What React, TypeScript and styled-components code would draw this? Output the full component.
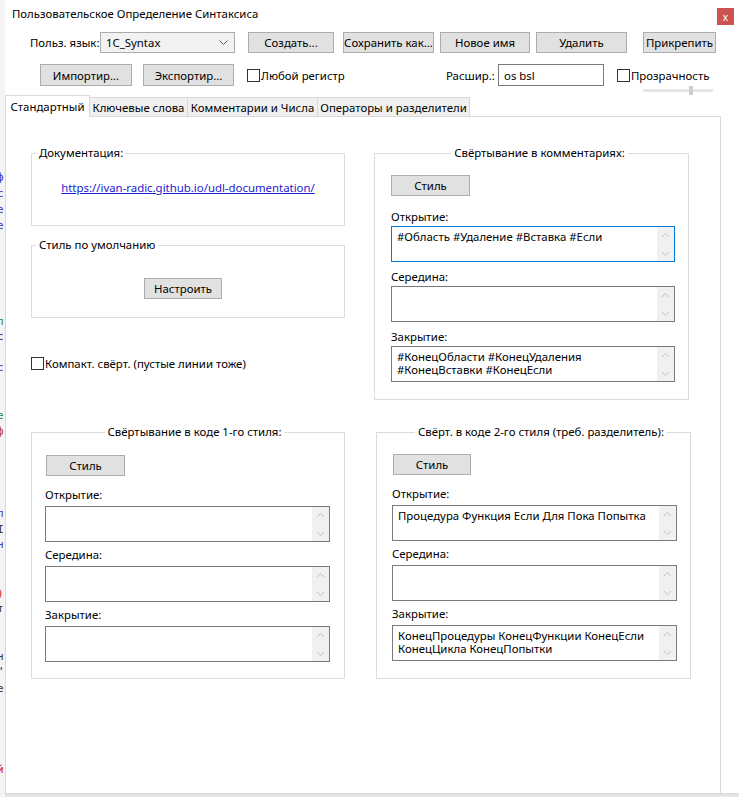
import React from "react";
import styled, {createGlobalStyle} from "styled-components";

const GlobalStyle = createGlobalStyle`
  html, body {
    margin: 0;
    padding: 0;
    background: #fff;
  }
  body {
    font-family: "Noto Sans", "Liberation Sans", sans-serif;
    font-size: 11.4px;
    color: #000;
  }
  * {
    box-sizing: border-box;
  }
`;

const Screen = styled.div`
  width: 739px;
  height: 797px;
  display: flex;
  overflow: hidden;
  background: #fff;
`;

const BackStrip = styled.div`
  width: 5px;
  flex: none;
  display: flex;
  flex-direction: column;
  overflow: hidden;
  background: #f4f4f4;
`;

const Glyph = styled.span<{ $mt: number; $color: string }>`
  display: block;
  margin-top: ${p => p.$mt}px;
  margin-left: -3px;
  height: 14px;
  line-height: 14px;
  font-size: 11px;
  font-family: "DejaVu Sans Mono", monospace;
  color: ${p => p.$color};
`;

const Window = styled.div`
  flex: 1;
  display: flex;
  flex-direction: column;
  min-width: 0;
`;

const TitleBar = styled.div`
  height: 31px;
  display: flex;
  align-items: flex-start;
  justify-content: space-between;
`;

const Title = styled.div`
  margin: 6px 0 0 7px;
  line-height: 16px;
`;

const CloseButton = styled.div`
  width: 17px;
  height: 17px;
  margin: 8px 5px 0 0;
  background: #cd5353;
  color: #fff;
  font-size: 10px;
  display: flex;
  align-items: center;
  justify-content: center;
  line-height: 1;
`;

const Row = styled.div<{ $mt: number; $h: number }>`
  display: flex;
  align-items: center;
  margin-top: ${p => p.$mt}px;
  height: ${p => p.$h}px;
`;

const Label = styled.span<{ $ml?: number; $w?: number }>`
  margin-left: ${p => p.$ml ?? 0}px;
  width: ${p => (p.$w ? `${p.$w}px` : "auto")};
  flex: none;
  white-space: nowrap;
`;

const Button = styled.div<{ $ml?: number; $w: number; $h?: number }>`
  margin-left: ${p => p.$ml ?? 0}px;
  width: ${p => p.$w}px;
  height: ${p => p.$h ?? 21}px;
  flex: none;
  background: #e1e1e1;
  border: 1px solid #adadad;
  display: flex;
  align-items: center;
  justify-content: center;
  white-space: nowrap;
`;

const Combo = styled.div`
  width: 135px;
  height: 21px;
  flex: none;
  background: #f2f2f2;
  border: 1px solid #acacac;
  display: flex;
  align-items: center;
  justify-content: space-between;
  padding: 0 6px 0 5px;
`;

const Input = styled.div<{ $w: number }>`
  width: ${p => p.$w}px;
  height: 22px;
  flex: none;
  border: 1px solid #7a7a7a;
  background: #fff;
  display: flex;
  align-items: center;
  padding-left: 5px;
`;

const Check = styled.label<{ $ml?: number; $w?: number }>`
  margin-left: ${p => p.$ml ?? 0}px;
  width: ${p => (p.$w ? `${p.$w}px` : "auto")};
  flex: none;
  display: flex;
  align-items: center;
  white-space: nowrap;
`;

const CheckBox = styled.span`
  width: 13px;
  height: 13px;
  border: 1px solid #333;
  background: #fff;
  margin-right: 1px;
  flex: none;
`;

const SliderRow = styled.div`
  height: 9px;
  display: flex;
  align-items: center;
  padding-left: 638px;
`;

const Track = styled.div`
  position: relative;
  width: 70px;
  height: 3px;
  background: #e6e6e6;
`;

const Thumb = styled.div`
  position: absolute;
  left: 46px;
  top: -3px;
  width: 4px;
  height: 9px;
  background: #cdcdcd;
`;

const TabStrip = styled.div`
  display: flex;
  align-items: flex-end;
  height: 21px;
  position: relative;
  z-index: 1;
`;

const Tab = styled.div<{ $w: number; $active?: boolean }>`
  width: ${p => p.$w}px;
  height: ${p => (p.$active ? 22 : 19)}px;
  margin-bottom: ${p => (p.$active ? -1 : 0)}px;
  background: ${p => (p.$active ? "#fff" : "#f0f0f0")};
  border: 1px solid #d9d9d9;
  border-bottom: none;
  border-left: ${p => (p.$active ? "1px solid #d9d9d9" : "none")};
  display: flex;
  align-items: center;
  justify-content: center;
  white-space: nowrap;
  padding-top: ${p => (p.$active ? 0 : 1)}px;
`;

const Panel = styled.div`
  width: 716px;
  height: 677px;
  flex: none;
  border: 1px solid #d9d9d9;
  border-bottom: none;
  padding: 36px 0 0 25px;
  display: grid;
  grid-template-columns: 314px 317px;
  column-gap: 29px;
  row-gap: 32px;
  align-content: start;
`;

const BottomEdge = styled.div`
  height: 4px;
  flex: none;
  background: linear-gradient(#dadada, #ececec);
`;

const Column = styled.div`
  display: flex;
  flex-direction: column;
`;

const Group = styled.div<{ $h: number; $w: number; $ml?: number; $mt?: number; $pl?: number }>`
  width: ${p => p.$w}px;
  height: ${p => p.$h}px;
  margin-left: ${p => p.$ml ?? 0}px;
  margin-top: ${p => p.$mt ?? 0}px;
  padding-left: ${p => p.$pl ?? 0}px;
  border: 1px solid #dcdcdc;
  display: flex;
  flex-direction: column;
  align-items: flex-start;
`;

const Legend = styled.div<{ $center?: boolean }>`
  align-self: ${p => (p.$center ? "center" : "flex-start")};
  margin: -9px 0 0 ${p => (p.$center ? 0 : 4)}px;
  padding: 0 3px;
  line-height: 16px;
  background: #fff;
  white-space: nowrap;
`;

const Link = styled.a`
  align-self: center;
  margin-top: 19px;
  line-height: 16px;
  color: #1b1bd0;
  text-decoration: underline;
`;

const FieldLabel = styled.div<{ $mt: number; $mb: number }>`
  margin: ${p => p.$mt}px 0 ${p => p.$mb}px;
  line-height: 16px;
`;

const TextBox = styled.div<{ $w: number; $focus?: boolean }>`
  width: ${p => p.$w}px;
  height: 36px;
  border: 1px solid ${p => (p.$focus ? "#0078d7" : "#7a7a7a")};
  background: #fff;
  display: flex;
`;

const TextContent = styled.div`
  flex: 1;
  padding: 3px 5px;
  line-height: 13px;
  white-space: pre;
  overflow: hidden;
`;

const ScrollBar = styled.div`
  width: 17px;
  flex: none;
  background: #f0f0f0;
  display: flex;
  flex-direction: column;
  align-items: center;
  justify-content: space-between;
  padding: 5px 0 4px;
`;

const Chevron = ({down}: { down?: boolean }) => (
  <svg width="9" height="6" viewBox="0 0 9 6">
    <path d={down ? "M1 1 L4.5 4.5 L8 1" : "M1 5 L4.5 1.5 L8 5"} fill="none" stroke="#c2c2c2" strokeWidth="1"/>
  </svg>
);

type FieldProps = {
  label: string;
  text?: string;
  w: number;
  mt: number;
  mb: number;
  focus?: boolean;
};

function Field({label, text, w, mt, mb, focus}: FieldProps) {
  return (
    <>
      <FieldLabel $mt={mt} $mb={mb}>{label}</FieldLabel>
      <TextBox $w={w} $focus={focus}>
        <TextContent>{text}</TextContent>
        <ScrollBar>
          <Chevron/>
          <Chevron down/>
        </ScrollBar>
      </TextBox>
    </>
  );
}

const glyphs = [
  {y: 178, ch: "ф", color: "#3b3bc4"},
  {y: 194, ch: "c", color: "#3b3bc4"},
  {y: 210, ch: "e", color: "#3b3bc4"},
  {y: 226, ch: "e", color: "#3b3bc4"},
  {y: 322, ch: "п", color: "#2e8b2e"},
  {y: 337, ch: "c", color: "#333366"},
  {y: 368, ch: "c", color: "#3b3bc4"},
  {y: 416, ch: "e", color: "#2e8b2e"},
  {y: 432, ch: "ф", color: "#b3402a"},
  {y: 514, ch: "п", color: "#3b3bc4"},
  {y: 530, ch: "I", color: "#333"},
  {y: 545, ch: "н", color: "#3b3bc4"},
  {y: 594, ch: ")", color: "#cc2222"},
  {y: 609, ch: "т", color: "#333"},
  {y: 657, ch: "н", color: "#333"},
  {y: 672, ch: "\"", color: "#333"},
  {y: 689, ch: "e", color: "#333"},
  {y: 770, ch: "й", color: "#cc2222"},
];

function App() {
  let prev = 0;
  return (
    <Screen>
      <GlobalStyle/>
      <BackStrip>
        {glyphs.map(g => {
          const mt = g.y - 7 - prev;
          prev = g.y + 7;
          return <Glyph key={g.y} $mt={mt} $color={g.color}>{g.ch}</Glyph>;
        })}
      </BackStrip>
      <Window>
        <TitleBar>
          <Title>Пользовательское Определение Синтаксиса</Title>
          <CloseButton>x</CloseButton>
        </TitleBar>

        <Row $mt={0} $h={22}>
          <Label $ml={25} $w={70}>Польз. язык:</Label>
          <Combo>
            <span>1C_Syntax</span>
            <svg width="9" height="5" viewBox="0 0 9 5">
              <path d="M0.5 0.5 L4.5 4.5 L8.5 0.5" fill="none" stroke="#555" strokeWidth="1"/>
            </svg>
          </Combo>
          <Button $ml={13} $w={86}>Создать...</Button>
          <Button $ml={9} $w={91}>Сохранить как...</Button>
          <Button $ml={6} $w={90}>Новое имя</Button>
          <Button $ml={6} $w={91}>Удалить</Button>
          <Button $ml={16} $w={73}>Прикрепить</Button>
        </Row>

        <Row $mt={11} $h={22}>
          <Button $ml={35} $w={92} $h={22}>Импортир...</Button>
          <Button $ml={11} $w={91} $h={22}>Экспортир...</Button>
          <Check $ml={13} $w={100}><CheckBox/>Любой регистр</Check>
          <Label $ml={99} $w={52}>Расшир.:</Label>
          <Input $w={106}>os bsl</Input>
          <Check $ml={13}><CheckBox/>Прозрачность</Check>
        </Row>
        <SliderRow>
          <Track><Thumb/></Track>
        </SliderRow>

        <TabStrip>
          <Tab $w={85} $active>Стандартный</Tab>
          <Tab $w={98}>Ключевые слова</Tab>
          <Tab $w={130}>Комментарии и Числа</Tab>
          <Tab $w={152}>Операторы и разделители</Tab>
        </TabStrip>

        <Panel>
          <Column>
            <Group $w={314} $h={73}>
              <Legend>Документация:</Legend>
              <Link>https://ivan-radic.github.io/udl-documentation/</Link>
            </Group>
            <Group $w={314} $h={73} $mt={19}>
              <Legend>Стиль по умолчанию</Legend>
              <Button $ml={112} $w={78} style={{marginTop: 25}}>Настроить</Button>
            </Group>
            <Check style={{marginTop: 38}}><CheckBox/>Компакт. свёрт. (пустые линии тоже)</Check>
          </Column>

          <Column>
            <Group $w={315} $h={247} $pl={16}>
              <Legend $center>Свёртывание в комментариях:</Legend>
              <Button $w={79} style={{marginTop: 14, marginBottom: 6}}>Стиль</Button>
              <Field label="Открытие:" w={284} mt={7} mb={1} focus text="#Область #Удаление #Вставка #Если"/>
              <Field label="Середина:" w={284} mt={7} mb={1}/>
              <Field label="Закрытие:" w={284} mt={7} mb={1}
                     text={"#КонецОбласти #КонецУдаления\n#КонецВставки #КонецЕсли"}/>
            </Group>
          </Column>

          <Column>
            <Group $w={314} $h={247} $pl={13}>
              <Legend $center>Свёртывание в коде 1-го стиля:</Legend>
              <Button $ml={1} $w={79} style={{marginTop: 15, marginBottom: 6}}>Стиль</Button>
              <Field label="Открытие:" w={285} mt={5} mb={3}/>
              <Field label="Середина:" w={285} mt={5} mb={3}/>
              <Field label="Закрытие:" w={285} mt={5} mb={3}/>
            </Group>
          </Column>

          <Column>
            <Group $w={315} $h={247} $ml={2} $pl={15}>
              <Legend $center>Свёрт. в коде 2-го стиля (треб. разделитель):</Legend>
              <Button $ml={1} $w={78} style={{marginTop: 14, marginBottom: 6}}>Стиль</Button>
              <Field label="Открытие:" w={285} mt={5} mb={3} text="Процедура Функция Если Для Пока Попытка"/>
              <Field label="Середина:" w={285} mt={5} mb={3}/>
              <Field label="Закрытие:" w={285} mt={5} mb={3}
                     text={"КонецПроцедуры КонецФункции КонецЕсли\nКонецЦикла КонецПопытки"}/>
            </Group>
          </Column>
        </Panel>
        <BottomEdge/>
      </Window>
    </Screen>
  );
}

export default App;
